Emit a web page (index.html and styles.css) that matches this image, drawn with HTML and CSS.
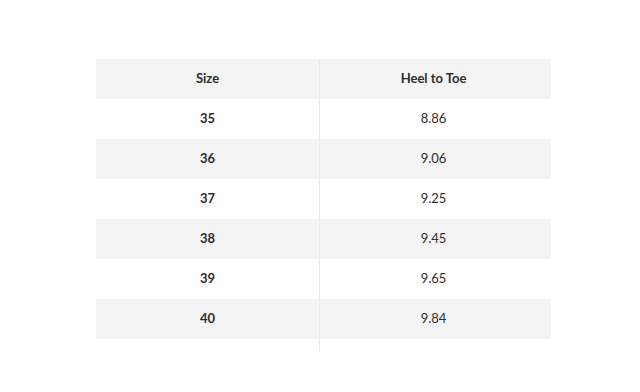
FILE: index.html
```html
<!DOCTYPE html>
<html lang="en">
<head>
<meta charset="utf-8">
<title>Size chart</title>
<link rel="stylesheet" href="styles.css">
</head>
<body>
<div class="chart">
  <div class="col col-size">
    <div class="cell head">Size</div>
    <div class="cell">35</div>
    <div class="cell alt">36</div>
    <div class="cell">37</div>
    <div class="cell alt">38</div>
    <div class="cell">39</div>
    <div class="cell alt">40</div>
  </div>
  <div class="col col-len">
    <div class="cell head">Heel to Toe</div>
    <div class="cell">8.86</div>
    <div class="cell alt">9.06</div>
    <div class="cell">9.25</div>
    <div class="cell alt">9.45</div>
    <div class="cell">9.65</div>
    <div class="cell alt">9.84</div>
  </div>
</div>
</body>
</html>
```

FILE: styles.css
```css
html, body {
  margin: 0;
  padding: 0;
  background: #ffffff;
}
body {
  font-family: Lato, "Open Sans", Arial, sans-serif;
  color: #2d2d2d;
  font-size: 13px;
  padding: 59px 0 0 96px;
}
.chart {
  display: flex;
  width: 455px;
}
.col {
  display: flex;
  flex-direction: column;
}
.col-size {
  width: 223px;
  border-right: 1px solid #e9e9e9;
  padding-bottom: 12px;
}
.col-len {
  flex: 1;
}
.cell {
  height: 40px;
  box-sizing: border-box;
  padding-bottom: 3px;
  display: flex;
  align-items: center;
  justify-content: center;
}
.col-len .cell {
  padding-right: 4px;
}
.col-size .cell {
  font-weight: 700;
}
.head {
  font-weight: 700;
  background: #f4f4f4;
}
.alt {
  background: #f4f4f4;
}
```
